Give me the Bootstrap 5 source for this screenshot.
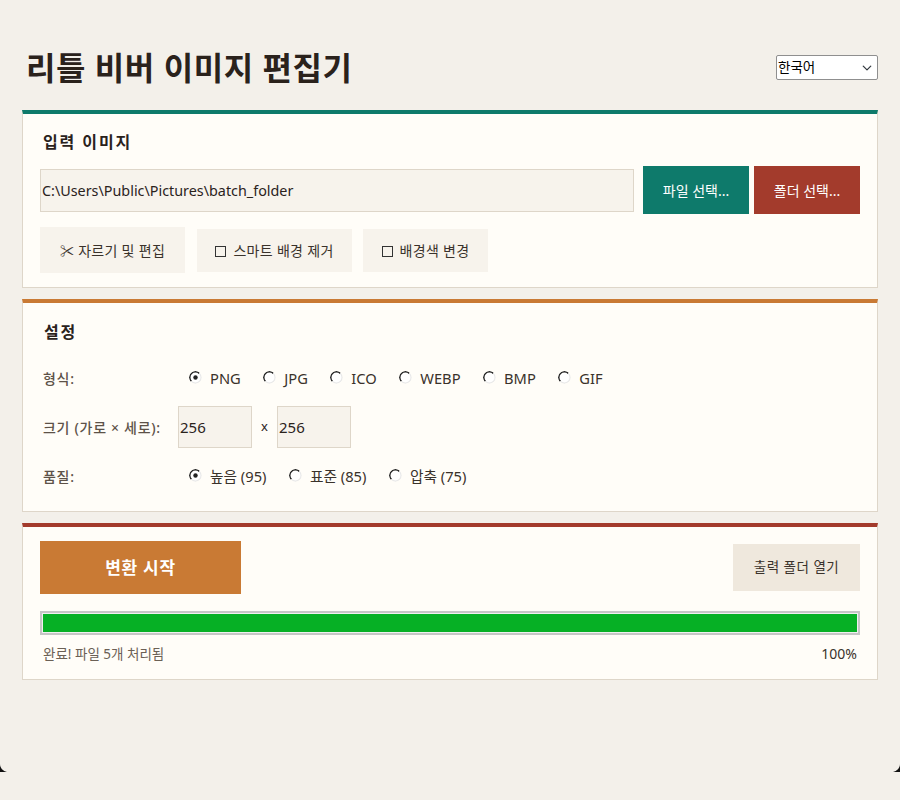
<!DOCTYPE html>
<html lang="ko">

<head>
  <meta charset="UTF-8" />
  <meta name="viewport" content="width=device-width, initial-scale=1.0" />
  <title>리틀 비버 이미지 편집기</title>
  <link href="https://cdn.jsdelivr.net/npm/bootstrap@5.3.0/dist/css/bootstrap.min.css" rel="stylesheet" />
  <style>
    html, body { height: 100%; }

    body {
      background: #f3f0ea;
      color: #2a221c;
      font-family: "Noto Sans", "Noto Sans CJK KR", sans-serif;
      font-size: 14px;
      position: relative;
      overflow: hidden;
    }

    .app-wrap { padding: 35px 22px 0; }

    .app-head { height: 66px; padding-left: 4px; margin-bottom: 9px; }

    .app-title {
      font-size: 32px;
      font-weight: 700;
      margin: 0;
      color: #2a221c;
      letter-spacing: 0.55px;
    }

    .lang-select {
      width: 102px;
      height: 25px;
      padding: 0 0 0 1px;
      font-size: 13.5px;
      line-height: 1;
      border: 1px solid #8f8f8f;
      border-radius: 2px;
      background-color: #fff;
      background-position: right 4px center;
      background-size: 12px 10px;
      color: #000;
      margin-top: -1px;
    }

    .panel {
      background: #fffdf8;
      border: 1px solid #ded6c9;
      border-top-width: 4px;
      border-radius: 0;
    }

    .panel-teal { border-top-color: #0e7a6b; height: 178px; padding: 16px 17px 0; margin-bottom: 11px; }
    .panel-orange { border-top-color: #c97a34; height: 213px; padding: 17px 20px 0; margin-bottom: 11px; }
    .panel-red { border-top-color: #a33b2c; height: 157px; padding: 14px 17px 0; }

    .panel-title { font-size: 16px; font-weight: 700; line-height: 24px; margin: 0; padding-left: 3px; letter-spacing: 1.9px; }
    .panel-orange .panel-title { padding-left: 1px; }

    .path-input {
      height: 43px;
      background: #f7f3ec;
      border: 1px solid #ded6c9;
      border-radius: 0;
      padding: 0 1px;
      font-size: 14.35px;
      color: #2a221c;
    }

    .act-btn {
      height: 48px;
      width: 106px;
      flex: none;
      border-radius: 0;
      color: #fff;
      font-size: 14px;
      padding: 0;
    }

    .btn-teal { background: #0e7a6b; border: 1px solid #0e7a6b; }
    .btn-brick { background: #a33b2c; border: 1px solid #a33b2c; }

    .tool-btn {
      background: #f7f3ec;
      border: 0;
      border-radius: 0;
      height: 43px;
      font-size: 14px;
      color: #3a322b;
      padding: 0;
      white-space: nowrap;
      letter-spacing: 0.3px;
    }

    .tool-crop { width: 145px; height: 46px; }
    .tool-smart { width: 155px; }
    .tool-color { width: 125px; }

    .box-mark {
      display: inline-block;
      width: 11px;
      height: 11px;
      border: 1.5px solid #333;
      margin-right: 7px;
      vertical-align: -1px;
    }

    .set-row { display: flex; align-items: center; }
    .set-label { width: 135px; flex: none; color: #5d5248; font-size: 14px; font-weight: 500; letter-spacing: 0.7px; white-space: nowrap; }

    .opt-radio { margin-right: 22.5px; display: flex; align-items: center; gap: 8px; }
    .opt-radio .form-check-input {
      width: 13px;
      height: 13px;
      margin: 0;
      border: 0;
      border-radius: 50%;
      background-color: transparent;
      background-size: 13px 13px;
      background-image: url("data:image/svg+xml,%3Csvg xmlns='http://www.w3.org/2000/svg' viewBox='0 0 13 13'%3E%3Ccircle cx='6.5' cy='6.5' r='5.5' fill='%23fff'/%3E%3Cpath d='M2.4 10.4A5.5 5.5 0 0 1 10.4 2.4' fill='none' stroke='%23222' stroke-width='1.5'/%3E%3Cpath d='M2.4 10.4A5.5 5.5 0 0 0 10.4 2.4' fill='none' stroke='%23e8e8e8' stroke-width='1.2'/%3E%3C/svg%3E");
    }

    .opt-radio .form-check-input:checked {
      background-color: transparent;
      background-image: url("data:image/svg+xml,%3Csvg xmlns='http://www.w3.org/2000/svg' viewBox='0 0 13 13'%3E%3Ccircle cx='6.5' cy='6.5' r='5.5' fill='%23fff'/%3E%3Cpath d='M2.4 10.4A5.5 5.5 0 0 1 10.4 2.4' fill='none' stroke='%23222' stroke-width='1.5'/%3E%3Cpath d='M2.4 10.4A5.5 5.5 0 0 0 10.4 2.4' fill='none' stroke='%23e8e8e8' stroke-width='1.2'/%3E%3Ccircle cx='6.5' cy='6.5' r='2.2' fill='%23222'/%3E%3C/svg%3E");
    }

    .opt-radio label { font-size: 14.7px; color: #3a322b; }

    .size-input {
      width: 74px;
      height: 42px;
      flex: none;
      background: #f7f3ec;
      border: 1px solid #ded6c9;
      border-radius: 0;
      padding: 0 1px;
      font-size: 15px;
      color: #2a221c;
    }

    .start-btn {
      width: 201px;
      height: 53px;
      background: #c97a34;
      border: 1px solid #c97a34;
      border-radius: 0;
      color: #fff;
      font-size: 17px;
      font-weight: 700;
      letter-spacing: 0.7px;
      padding: 0;
    }

    .open-btn {
      width: 127px;
      height: 47px;
      background: #efe8dd;
      border: 0;
      border-radius: 0;
      font-size: 13.5px;
      color: #3a322b;
      padding: 0;
      letter-spacing: 0.5px;
    }

    .conv-bar {
      height: 24px;
      border: 2px solid #c6c6c6;
      border-radius: 0;
      background: #f0f0f0;
      padding: 1px;
    }

    .conv-bar .progress-bar { background: #06b025; }

    .status-line { font-size: 13.5px; color: #6b6055; padding: 0 3px; line-height: 18px; margin-top: 10px; }
    .status-pct { color: #3a322b; font-size: 14px; }

    .win-corner { position: absolute; top: 764px; width: 8px; height: 8px; }
    .win-corner-l { left: 0; }
    .win-corner-r { right: 0; }
  </style>
</head>

<body>
  <div class="app-wrap">
    <div class="app-head d-flex justify-content-between align-items-center">
      <h1 class="app-title">리틀 비버 이미지 편집기</h1>
      <select class="form-select lang-select">
        <option>한국어</option>
      </select>
    </div>

    <div class="panel panel-teal">
      <h2 class="panel-title">입력 이미지</h2>
      <div class="d-flex align-items-center" style="margin-top:12px">
        <input type="text" class="form-control path-input flex-grow-1" value="C:\Users\Public\Pictures\batch_folder" />
        <button class="btn act-btn btn-teal" style="margin-left:9px">파일 선택...</button>
        <button class="btn act-btn btn-brick" style="margin-left:5px">폴더 선택...</button>
      </div>
      <div class="d-flex align-items-center" style="margin-top:13px">
        <button class="btn tool-btn tool-crop">✂ 자르기 및 편집</button>
        <button class="btn tool-btn tool-smart" style="margin-left:12px"><span class="box-mark"></span>스마트 배경 제거</button>
        <button class="btn tool-btn tool-color" style="margin-left:11px"><span class="box-mark"></span>배경색 변경</button>
      </div>
    </div>

    <div class="panel panel-orange">
      <h2 class="panel-title">설정</h2>
      <div class="set-row" style="margin-top:21px;height:26px">
        <span class="set-label" style="width:146px">형식:</span>
        <div class="opt-radio"><input class="form-check-input" type="radio" name="fmt" id="f1" checked /><label for="f1">PNG</label></div>
        <div class="opt-radio"><input class="form-check-input" type="radio" name="fmt" id="f2" /><label for="f2">JPG</label></div>
        <div class="opt-radio"><input class="form-check-input" type="radio" name="fmt" id="f3" /><label for="f3">ICO</label></div>
        <div class="opt-radio"><input class="form-check-input" type="radio" name="fmt" id="f4" /><label for="f4">WEBP</label></div>
        <div class="opt-radio"><input class="form-check-input" type="radio" name="fmt" id="f5" /><label for="f5">BMP</label></div>
        <div class="opt-radio"><input class="form-check-input" type="radio" name="fmt" id="f6" /><label for="f6">GIF</label></div>
      </div>
      <div class="set-row" style="margin-top:15px">
        <span class="set-label">크기 (가로 × 세로):</span>
        <input type="text" class="form-control size-input" value="256" />
        <span style="width:25px;text-align:center;font-size:13px">x</span>
        <input type="text" class="form-control size-input" value="256" />
      </div>
      <div class="set-row" style="margin-top:15px;height:26px">
        <span class="set-label" style="width:146px">품질:</span>
        <div class="opt-radio"><input class="form-check-input" type="radio" name="q" id="q1" checked /><label for="q1">높음 (95)</label></div>
        <div class="opt-radio"><input class="form-check-input" type="radio" name="q" id="q2" /><label for="q2">표준 (85)</label></div>
        <div class="opt-radio"><input class="form-check-input" type="radio" name="q" id="q3" /><label for="q3">압축 (75)</label></div>
      </div>
    </div>

    <div class="panel panel-red">
      <div class="d-flex justify-content-between align-items-center">
        <button class="btn start-btn">변환 시작</button>
        <button class="btn open-btn">출력 폴더 열기</button>
      </div>
      <div class="progress conv-bar" style="margin-top:17px">
        <div class="progress-bar" style="width:100%"></div>
      </div>
      <div class="d-flex justify-content-between status-line">
        <span>완료! 파일 5개 처리됨</span>
        <span class="status-pct">100%</span>
      </div>
    </div>
  </div>

  <svg class="win-corner win-corner-l" viewBox="0 0 8 8"><path d="M0 0C0 4 3 7 7 8H0Z" fill="#111" /></svg>
  <svg class="win-corner win-corner-r" viewBox="0 0 8 8"><path d="M8 0C8 4 5 7 1 8H8Z" fill="#111" /></svg>
</body>

</html>
